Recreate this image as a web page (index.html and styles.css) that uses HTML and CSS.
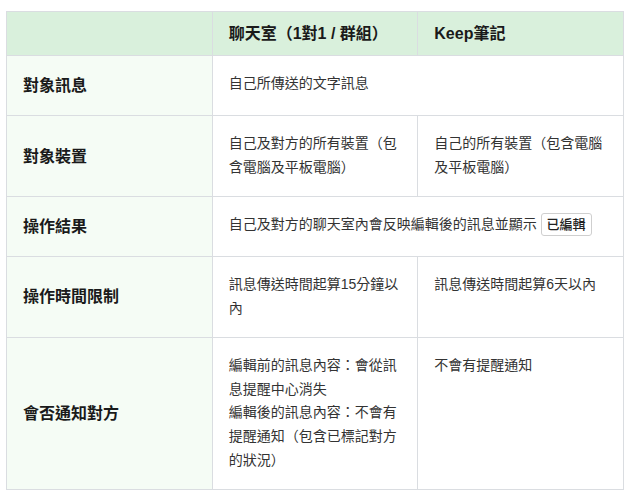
FILE: index.html
```html
<!DOCTYPE html>
<html lang="zh-Hant">
<head>
<meta charset="utf-8">
<link rel="stylesheet" href="styles.css">
</head>
<body>
<div class="wrap">
<table class="cmp">
  <thead>
    <tr>
      <th class="corner"></th>
      <th>聊天室（1對1 / 群組）</th>
      <th>Keep筆記</th>
    </tr>
  </thead>
  <tbody>
    <tr>
      <th class="label">對象訊息</th>
      <td colspan="2">自己所傳送的文字訊息</td>
    </tr>
    <tr>
      <th class="label">對象裝置</th>
      <td>自己及對方的所有裝置（包含電腦及平板電腦）</td>
      <td>自己的所有裝置（包含電腦及平板電腦）</td>
    </tr>
    <tr>
      <th class="label">操作結果</th>
      <td colspan="2">自己及對方的聊天室內會反映編輯後的訊息並顯示 <span class="badge">已編輯</span></td>
    </tr>
    <tr>
      <th class="label">操作時間限制</th>
      <td>訊息傳送時間起算15分鐘以內</td>
      <td>訊息傳送時間起算6天以內</td>
    </tr>
    <tr>
      <th class="label">會否通知對方</th>
      <td>編輯前的訊息內容：會從訊息提醒中心消失<br>編輯後的訊息內容：不會有提醒通知（包含已標記對方的狀況）</td>
      <td>不會有提醒通知</td>
    </tr>
  </tbody>
</table>
</div>
</body>
</html>
```

FILE: styles.css
```css
html, body {
  margin: 0;
  padding: 0;
  background: #ffffff;
}
body {
  font-family: "Liberation Sans", "Noto Sans CJK TC", sans-serif;
  color: #333333;
}
.wrap {
  padding: 11px 6px;
}
.cmp {
  width: 618px;
  table-layout: fixed;
  border-collapse: collapse;
}
.cmp th, .cmp td {
  border: 1px solid #dadde1;
  text-align: left;
}
.cmp thead th {
  background: #d9f0dc;
  font-size: 16px;
  font-weight: bold;
  line-height: 1.7;
  padding: 8px 16px;
  color: #1a1a1a;
}
.cmp .label {
  background: #f5fcf5;
  font-size: 16px;
  font-weight: bold;
  line-height: 1.7;
  padding: 16px 16px;
  vertical-align: middle;
  color: #1a1a1a;
}
.cmp td {
  font-size: 14px;
  line-height: 1.7;
  padding: 16px 16px;
  vertical-align: top;
  color: #333333;
}
.badge {
  display: inline-block;
  border: 1px solid #cfcfcf;
  border-radius: 3px;
  padding: 0 5px;
  font-size: 13px;
  font-weight: 500;
  line-height: 21px;
  color: #222222;
  background: #fff;
}
```
